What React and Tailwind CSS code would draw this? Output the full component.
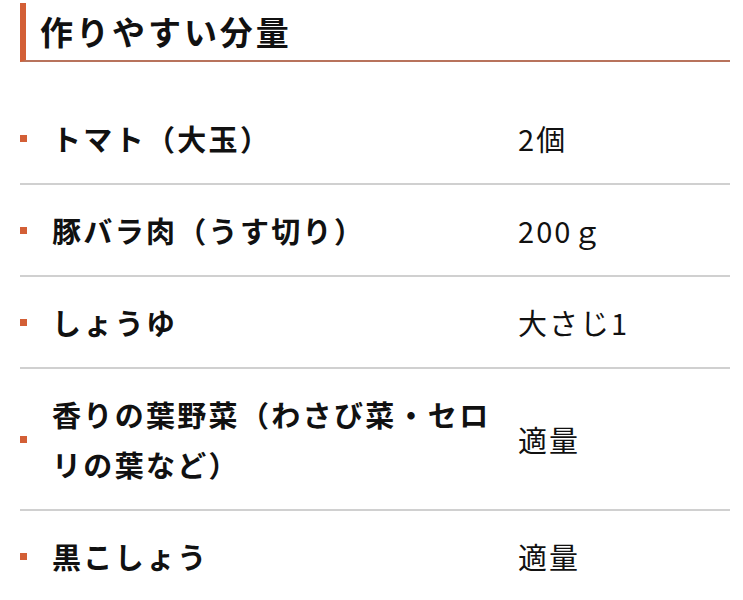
import React from "react";

const rows = [
  { name: "トマト（大玉）", qty: "2個" },
  { name: "豚バラ肉（うす切り）", qty: "200ｇ" },
  { name: "しょうゆ", qty: "大さじ1" },
  { name: "香りの葉野菜（わさび菜・セロリの葉など）", qty: "適量" },
  { name: "黒こしょう", qty: "適量" },
];

export default function App() {
  return (
    <div
      className="bg-white w-[743px] h-[600px] overflow-hidden pt-[3px] pl-[20px] pr-[13px] text-[#111]"
      style={{ fontFamily: '"Noto Sans CJK JP", "Noto Sans", sans-serif' }}
    >
      <h2 className="border-l-[6px] border-[#d35f36] border-b-2 border-b-[#b8735c] pl-[14px] h-[59px] flex items-center text-[33px] font-bold tracking-[0.09em] leading-none">
        作りやすい分量
      </h2>
      <div className="mt-[31px]">
        {rows.map((r, i) => (
          <div
            key={i}
            className={`flex items-center py-[20px] ${i < rows.length - 1 ? "border-b-2 border-[#d0d0d0]" : ""}`}
          >
            <div className="w-[32px] shrink-0 flex items-center">
              <span className="block w-[7px] h-[7px] bg-[#d35f36]" />
            </div>
            <div className="w-[466px] shrink-0 pr-[6px] text-[29px] font-bold leading-[50px] tracking-[0.08em]">
              {r.name}
            </div>
            <div className="flex-1 text-[29px] leading-[50px] tracking-[0.07em]">
              {r.qty}
            </div>
          </div>
        ))}
      </div>
    </div>
  );
}
